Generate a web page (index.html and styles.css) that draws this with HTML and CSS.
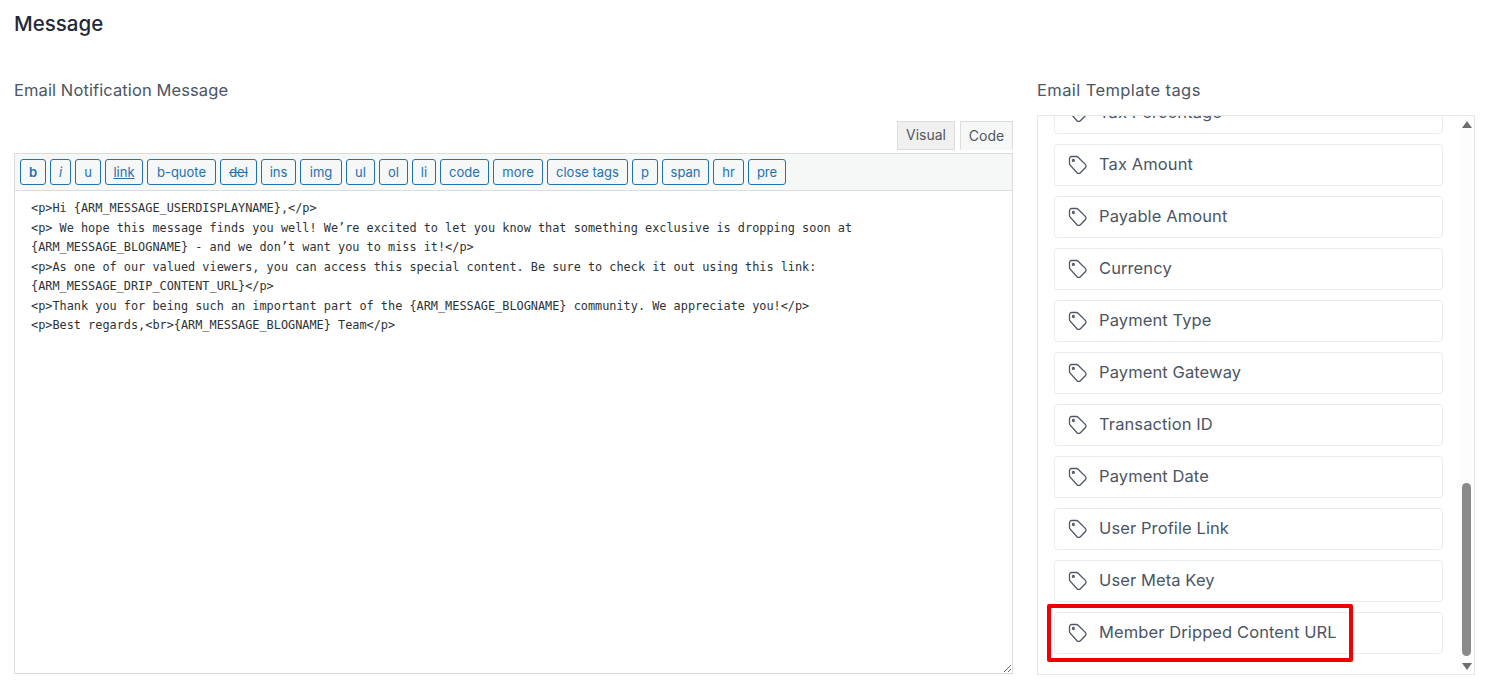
FILE: index.html
```html
<!DOCTYPE html>
<html lang="en">
<head>
<meta charset="utf-8">
<title>Message</title>
<link rel="stylesheet" href="styles.css">
</head>
<body>
<svg class="sprite" aria-hidden="true"><symbol id="tag" viewBox="0 0 20 20"><path d="M1.5 3.6A2.1 2.1 0 0 1 3.6 1.5H8.4a2.4 2.4 0 0 1 1.7.7l7.2 7.2a2.4 2.4 0 0 1 0 3.4l-4.9 4.9a2.4 2.4 0 0 1-3.4 0L2.2 10.1a2.4 2.4 0 0 1-.7-1.7Z"/><circle cx="5.4" cy="5.4" r=".9"/></symbol></svg>
<main class="page">
  <h1 class="title">Message</h1>
  <div class="columns">
    <section class="editor-col">
      <h2 class="label">Email Notification Message</h2>
      <div class="tabs">
        <button class="tab tab-off">Visual</button>
        <button class="tab tab-on">Code</button>
      </div>
      <div class="toolbar">
        <button class="qt qt-b">b</button>
        <button class="qt qt-i">i</button>
        <button class="qt">u</button>
        <button class="qt qt-link">link</button>
        <button class="qt">b-quote</button>
        <button class="qt qt-del">del</button>
        <button class="qt">ins</button>
        <button class="qt">img</button>
        <button class="qt">ul</button>
        <button class="qt">ol</button>
        <button class="qt">li</button>
        <button class="qt">code</button>
        <button class="qt">more</button>
        <button class="qt">close tags</button>
        <button class="qt">p</button>
        <button class="qt">span</button>
        <button class="qt">hr</button>
        <button class="qt">pre</button>
      </div>
      <textarea class="code" spellcheck="false"><p>Hi {ARM_MESSAGE_USERDISPLAYNAME},</p>
<p> We hope this message finds you well! We’re excited to let you know that something exclusive is dropping soon at {ARM_MESSAGE_BLOGNAME} - and we don’t want you to miss it!</p>
<p>As one of our valued viewers, you can access this special content. Be sure to check it out using this link: {ARM_MESSAGE_DRIP_CONTENT_URL}</p>
<p>Thank you for being such an important part of the {ARM_MESSAGE_BLOGNAME} community. We appreciate you!</p>
<p>Best regards,<br>{ARM_MESSAGE_BLOGNAME} Team</p></textarea>
    </section>
    <aside class="tags-col">
      <h2 class="label tags-label">Email Template tags</h2>
      <div class="tags-box">
        <ul class="tags">
          <li class="tag"><svg class="tag-icon"><use href="#tag"/></svg>Tax Percentage</li>
          <li class="tag"><svg class="tag-icon"><use href="#tag"/></svg>Tax Amount</li>
          <li class="tag"><svg class="tag-icon"><use href="#tag"/></svg>Payable Amount</li>
          <li class="tag"><svg class="tag-icon"><use href="#tag"/></svg>Currency</li>
          <li class="tag"><svg class="tag-icon"><use href="#tag"/></svg>Payment Type</li>
          <li class="tag"><svg class="tag-icon"><use href="#tag"/></svg>Payment Gateway</li>
          <li class="tag"><svg class="tag-icon"><use href="#tag"/></svg>Transaction ID</li>
          <li class="tag"><svg class="tag-icon"><use href="#tag"/></svg>Payment Date</li>
          <li class="tag"><svg class="tag-icon"><use href="#tag"/></svg>User Profile Link</li>
          <li class="tag"><svg class="tag-icon"><use href="#tag"/></svg>User Meta Key</li>
          <li class="tag"><svg class="tag-icon"><use href="#tag"/></svg>Member Dripped Content URL</li>
        </ul>
        <div class="scrollbar">
          <span class="arrow arrow-up"></span>
          <span class="thumb"></span>
          <span class="arrow arrow-down"></span>
        </div>
        <div class="highlight"></div>
      </div>
    </aside>
  </div>
</main>
</body>
</html>
```
FILE: styles.css
```css
* { box-sizing: border-box; }
html, body { margin: 0; height: 100%; overflow: hidden; background: #fff; }
body { font-family: Inter, "Open Sans", sans-serif; color: #4b5563; }
.sprite { display: none; }
.page { height: 687px; padding: 12px 10px 0 14px; display: flex; flex-direction: column; }
.title { margin: 0; font-size: 20.5px; line-height: 24px; font-weight: 500; color: #1f2937; }
.columns { display: flex; gap: 24px; margin-top: 42px; }
.editor-col { width: 999px; display: flex; flex-direction: column; }
.tags-col { width: 438px; display: flex; flex-direction: column; }
.label { margin: 0; font-size: 16.5px; line-height: 24px; font-weight: 400; letter-spacing: .1px; color: #4b5563; }
.tabs { display: flex; justify-content: flex-end; gap: 5px; margin-top: 19px; height: 29px; }
.tab { font: inherit; font-size: 14px; padding: 0 0 2px; border: 1px solid #dcdcde; border-bottom: 0; color: #50575e; }
.tab-off { width: 58px; background: #f0f0f1; border-bottom: 1px solid #dcdcde; }
.tab-on { width: 53px; background: #f6f7f7; }
.toolbar { margin-top: 3px; height: 38px; padding: 5px 5px; display: grid; gap: 4px;
  grid-template-columns: 26px 21px 26px 38px 69px 37px 35px 42px 29px 29px 24px 49px 50px 81px 26px 47px 31px 38px;
  background: #f6f7f7; border: 1px solid #dcdcde; justify-content: start; }
.qt { font: inherit; font-size: 13px; height: 26px; padding: 0; white-space: nowrap; color: #2271b1; background: #f6f7f7; border: 1px solid #2271b1; border-radius: 3px; }
.qt-b { font-weight: 600; }
.qt-i { font-style: italic; }
.qt-link { text-decoration: underline; }
.qt-del { text-decoration: line-through; }
.code { display: block; width: 100%; height: 483px; padding: 8px 16px; border: 1px solid #dcdcde; border-top: 0; border-radius: 0; outline: 0; margin: 0; resize: both; overflow: hidden; background: #fff; color: #2c3338; font-family: "DejaVu Sans Mono", "Liberation Mono", monospace; font-size: 11.87px; line-height: 19.5px; }
.tags-label { margin-bottom: 13px; letter-spacing: .4px; }
.tags-box { position: relative; height: 560px; border: 1px solid #e5e7eb; display: flex; flex-direction: column; justify-content: flex-end; overflow: hidden; }
.tags { list-style: none; margin: 0; padding: 0 31px 20px 16px; display: flex; flex-direction: column; gap: 10px; flex: none; }
.tag { height: 42px; flex: none; display: flex; align-items: center; gap: 11px; padding: 0 0 2px 13px; border: 1px solid #e9ebee; border-radius: 4px; font-size: 16.5px; letter-spacing: .1px; color: #4b5563; }
.tag-icon { width: 20px; height: 20px; margin-top: 2px; flex: none; fill: none; stroke: #4b5563; stroke-width: 1.3; }
.scrollbar { position: absolute; top: 0; right: 0; bottom: 0; width: 15px; display: flex; flex-direction: column; align-items: center; background: #fdfdfd; }
.arrow { width: 0; height: 0; border-left: 5px solid transparent; border-right: 5px solid transparent; flex: none; }
.arrow-up { margin-top: 5px; border-bottom: 7px solid #6f6f6f; }
.arrow-down { margin-top: 7px; margin-bottom: 4px; border-top: 7px solid #6f6f6f; }
.thumb { width: 9px; height: 173px; margin-top: auto; border-radius: 5px; background: #8a8a8a; }
.highlight { position: absolute; left: 9px; top: 488px; width: 306px; height: 58px; border: 4px solid #f00000; border-radius: 2px; pointer-events: none; }
```
